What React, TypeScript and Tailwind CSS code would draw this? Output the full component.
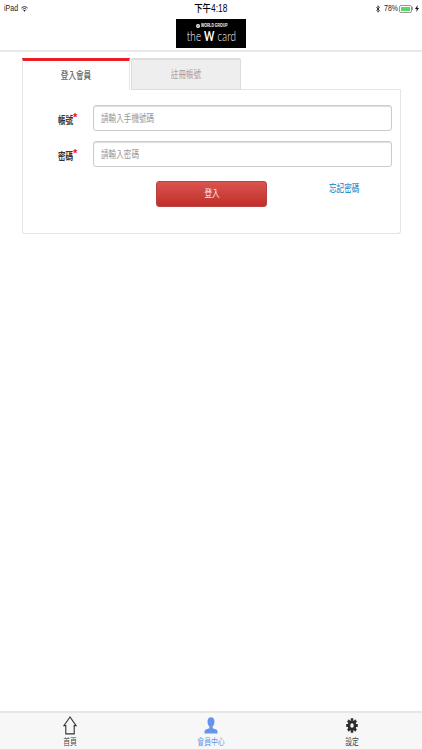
import type { ReactNode } from "react";
import clsx from "clsx";

const navItems = [
  { name: "首頁", icon: <HomeIcon /> },
  { name: "會員中心", icon: <MemberIcon />, active: true },
  { name: "設定", icon: <GearIcon /> },
];

const fields = [
  { label: "帳號", placeholder: "請輸入手機號碼" },
  { label: "密碼", placeholder: "請輸入密碼" },
];

function HomeIcon() {
  return (
    <svg className="h-[19px] w-[14px]" viewBox="0 0 14 19" fill="none" stroke="#333" strokeWidth="1.1">
      <path d="M7 1 L0.9 9.6 H2.8 V17.9 H11.2 V9.6 H13.1 Z" />
    </svg>
  );
}

function MemberIcon() {
  return (
    <svg className="h-[19px] w-[14px]" viewBox="0 0 14 19" fill="#6495e8">
      <path d="M7 1.2c2.2 0 3.5 1.7 3.5 4.3 0 2.2-.8 4.2-1.9 5.1v1.6l3.4 1.3c1 .4 1.5 1.2 1.5 2.3v1.7H.5v-1.7c0-1.1.5-1.9 1.5-2.3l3.4-1.3v-1.6C4.300 9.700 3.500 7.700 3.500 5.500 3.500 2.900 4.800 1.200 7 1.200Z" />
    </svg>
  );
}

function GearIcon() {
  return (
    <svg className="h-[15px] w-[12px]" viewBox="0 0 24 24" preserveAspectRatio="none" fill="none" stroke="#2b2b2b">
      <circle cx="12" cy="12" r="6" strokeWidth="5" />
      <path
        strokeWidth="5"
        d="M12 0.500v4M12 19.500v4M0.500 12h4M19.500 12h4M3.900 3.900l2.800 2.800M17.300 17.300l2.800 2.800M3.900 20.100l2.800-2.800M17.300 6.700l2.800-2.800"
      />
    </svg>
  );
}

function Narrow({ children, className }: { children: ReactNode; className?: string }) {
  return (
    <span className={clsx("inline-block scale-x-[0.76] whitespace-nowrap", className)}>
      {children}
    </span>
  );
}

function StatusBar() {
  return (
    <div className="grid h-[17px] grid-cols-3 items-center text-[9px] leading-none text-[#222]">
      <div className="flex items-center pl-1">
        <span className="w-[17px] whitespace-nowrap">
          <Narrow className="origin-left scale-x-[0.78]">iPad</Narrow>
        </span>
        <svg className="h-[6px] w-[7px]" viewBox="0 0 14 12" fill="none" stroke="#222" strokeWidth="1.900">
          <path d="M0.800 4.200C4.400 0.300 9.600 0.300 13.200 4.200M3.300 6.900c2.200-2.300 5.200-2.300 7.400 0" />
          <path d="M7 11.500 4.800 9c1.300-1.200 3.100-1.200 4.400 0Z" fill="#222" stroke="none" />
        </svg>
      </div>
      <div className="flex justify-center font-medium text-black">
        <Narrow className="scale-x-[0.84] text-[10px]">下午4:18</Narrow>
      </div>
      <div className="flex items-center justify-end pr-[3px]">
        <svg className="h-[8px] w-[4px]" viewBox="0 0 8 16" fill="none" stroke="#222" strokeWidth="1.700">
          <path d="M0.800 4.500 7 11.200 4 14.500V1.500L7 4.800 0.800 11.500" />
        </svg>
        <span className="ml-[4px] w-[15px] whitespace-nowrap">
          <Narrow className="origin-left scale-x-[0.78]">78%</Narrow>
        </span>
        <span className="flex h-[8px] w-[13px] rounded-[2px] border border-[#999] p-px">
          <span className="w-[9px] bg-[#55d868]" />
        </span>
        <span className="h-[3px] w-px bg-[#999]" />
        <svg className="ml-[2px] h-[7px] w-[4px]" viewBox="0 0 8 14" fill="#111">
          <path d="M5.500 0 0 8h3.500L2.500 14 8 6H4.500Z" />
        </svg>
      </div>
    </div>
  );
}

function Header() {
  return (
    <header className="flex h-[35px] justify-center border-b-2 border-[#e9e9e9] pt-[2px]">
      <div className="flex h-[29px] w-[70px] flex-col items-center bg-black pt-[4px] text-white">
        <div className="flex h-[6px] items-center gap-px">
          <svg className="h-[4px] w-[4px]" viewBox="0 0 8 8">
            <circle cx="4" cy="4" r="4" fill="#fff" />
            <path d="M2 2.500 3.500 5.500 6 2" fill="none" stroke="#000" />
          </svg>
          <span className="w-[25px] text-[4.5px] leading-none font-bold whitespace-nowrap">
            <Narrow className="origin-left scale-x-[0.74]">WORLD GROUP</Narrow>
          </span>
        </div>
        <div className="flex h-[15px] items-center font-['Lato','Liberation_Sans',sans-serif] text-[13px] leading-none font-light">
          <Narrow className="scale-x-[0.8] tracking-[0.2px]">
            the <b className="font-bold">W</b> card
          </Narrow>
        </div>
      </div>
    </header>
  );
}

function LoginForm() {
  return (
    <form className="h-[144px] rounded-b-[3px] border border-t-0 border-[#e4e4e4] pt-[15px] pr-[8px] text-[10px]">
      {fields.map((field) => (
        <div key={field.label} className="mb-[10px] flex h-[26px]">
          <label className="flex w-[70px] items-center pt-[5px] pl-[35px] font-bold text-[#333]">
            <span className="w-[15px] whitespace-nowrap">
              <Narrow className="origin-left">{field.label}</Narrow>
            </span>
            <span className="relative -top-[3px] text-[11px] leading-none text-[#ef1515]">*</span>
          </label>
          <div className="flex flex-1 items-center rounded-[3px] border border-[#ccc] bg-white pl-[7px] text-[#999] shadow-[inset_0_1px_1px_#ddd]">
            <Narrow className="origin-left">{field.placeholder}</Narrow>
          </div>
        </div>
      ))}
      <div className="flex items-start pt-[4px] pl-[133px]">
        <button
          type="button"
          className="h-[26px] w-[111px] rounded-[3px] border border-[#b94242] bg-linear-to-b from-[#d9534f] to-[#c12e2a] leading-none text-[#ffe8e6]"
        >
          <Narrow>登入</Narrow>
        </button>
        <a className="ml-[62px] leading-[16px] font-medium text-[#3391cf]">
          <Narrow className="origin-left">忘記密碼</Narrow>
        </a>
      </div>
    </form>
  );
}

export default function App() {
  return (
    <div className="flex h-[750px] w-[422px] flex-col overflow-hidden bg-white font-['Liberation_Sans','Noto_Sans_CJK_TC',sans-serif]">
      <StatusBar />
      <Header />
      <main className="flex-1 pt-[6px] pr-[21px] pl-[22px]">
        <div className="flex h-[32px] text-[10px]">
          <div className="flex w-[108px] items-center justify-center border-x border-t-[3px] border-x-[#e8e8e8] border-t-[#ed1c24] font-medium text-[#666]">
            <Narrow>登入會員</Narrow>
          </div>
          <div className="ml-px flex w-[110px] items-center justify-center rounded-t-[2px] border border-t-2 border-[#ddd] bg-[#eee] text-[#b09a9a]">
            <Narrow>註冊帳號</Narrow>
          </div>
          <div className="flex-1 border-b border-[#e4e4e4]" />
        </div>
        <LoginForm />
      </main>
      <nav className="flex h-[39px] justify-between border-t-2 border-b border-t-[#e6e6e6] border-b-[#ddd] bg-[#f7f7f7]">
        {navItems.map((item) => (
          <div
            key={item.name}
            className={clsx(
              "flex w-[141px] flex-col items-center text-[9px] leading-[10px]",
              item.active ? "text-[#6495e8]" : "text-[#444]",
            )}
          >
            <div className="flex h-[24px] items-center">{item.icon}</div>
            <Narrow>{item.name}</Narrow>
          </div>
        ))}
      </nav>
    </div>
  );
}
